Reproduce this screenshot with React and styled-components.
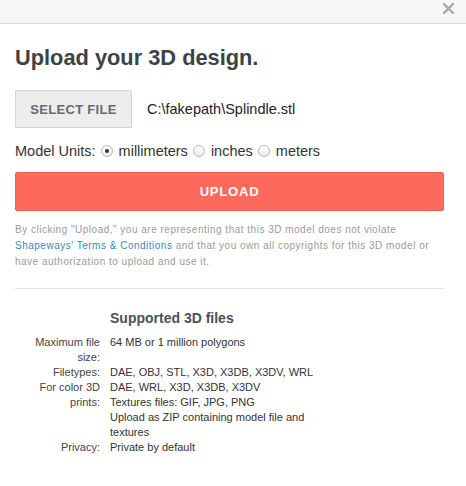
import React from "react";
import styled, { createGlobalStyle } from "styled-components";

const GlobalStyle = createGlobalStyle`
  html, body {
    margin: 0;
    padding: 0;
    background: #fff;
    font-family: "Liberation Sans", Arial, sans-serif;
  }
`;

const Modal = styled.div`
  width: 466px;
  height: 486px;
  background: #fff;
`;

const TopBar = styled.div`
  height: 24px;
  background: #f6f6f6;
  border-bottom: 1px solid #dedede;
  display: flex;
  justify-content: flex-end;
  align-items: flex-start;
  padding: 3px 12px 0 0;
  box-sizing: border-box;
`;

const CloseIcon = () => (
  <svg width="11" height="11" viewBox="0 0 11 11">
    <path d="M1 1L10 10M10 1L1 10" stroke="#a9a9a9" strokeWidth="2.4" strokeLinecap="square" />
  </svg>
);

const Body = styled.div`
  padding: 0 22px 0 15px;
`;

const Title = styled.h1`
  margin: 20px 0 0;
  font-size: 21.8px;
  line-height: 28px;
  font-weight: bold;
  color: #3b4347;
`;

const FileRow = styled.div`
  display: flex;
  align-items: center;
  gap: 15px;
  margin-top: 18px;
`;

const SelectButton = styled.button`
  width: 117px;
  height: 38px;
  background: #ededed;
  border: 1px solid #d3d3d3;
  border-radius: 1px;
  font-family: inherit;
  font-size: 13px;
  font-weight: bold;
  letter-spacing: 0.3px;
  color: #666b6e;
  padding: 0;
`;

const FileName = styled.span`
  font-size: 14.5px;
  color: #222;
`;

const UnitsRow = styled.div`
  display: flex;
  align-items: center;
  margin-top: 11px;
  font-size: 14.5px;
  color: #333;
  height: 24px;
`;

const Radio = styled.span`
  width: 12px;
  height: 12px;
  border-radius: 50%;
  border: 1px solid #b9b9b9;
  background: linear-gradient(#fff, #ececec);
  display: inline-flex;
  align-items: center;
  justify-content: center;
  margin: 0 6px 0 5px;
  box-sizing: border-box;
  &::after {
    content: "";
    width: 4px;
    height: 4px;
    border-radius: 50%;
    background: ${(p) => (p.checked ? "#333" : "transparent")};
  }
`;

const UploadButton = styled.button`
  display: block;
  width: 100%;
  height: 39px;
  margin-top: 9px;
  background: #fd6a5b;
  border: 1px solid #ef5f51;
  border-radius: 2px;
  color: #fff;
  font-family: inherit;
  font-size: 13px;
  font-weight: bold;
  letter-spacing: 0.8px;
`;

const Disclaimer = styled.p`
  margin: 11px 0 0;
  font-size: 10px;
  line-height: 16px;
  color: #9a9a9a;
  letter-spacing: 0.5px;
`;

const TermsLink = styled.a`
  color: #2d8cc4;
  text-decoration: none;
`;

const Divider = styled.hr`
  border: 0;
  border-top: 1px solid #e4e4e4;
  margin: 18px 0 0;
`;

const Supported = styled.div`
  margin-top: 20px;
  display: grid;
  grid-template-columns: 85px 215px;
  column-gap: 10px;
  font-size: 11px;
  line-height: 15px;
  color: #333;
`;

const SupportedTitle = styled.h2`
  grid-column: 2;
  margin: 0 0 8px;
  font-size: 14px;
  line-height: 18px;
  font-weight: bold;
  color: #4a5256;
`;

const Label = styled.div`
  text-align: right;
  color: #444;
`;

const Value = styled.div`
  color: #333;
`;

const specs = [
  ["Maximum file size:", ["64 MB or 1 million polygons"]],
  ["Filetypes:", ["DAE, OBJ, STL, X3D, X3DB, X3DV, WRL"]],
  [
    "For color 3D prints:",
    [
      "DAE, WRL, X3D, X3DB, X3DV",
      "Textures files: GIF, JPG, PNG",
      "Upload as ZIP containing model file and textures",
    ],
  ],
  ["Privacy:", ["Private by default"]],
];

export default function App() {
  return (
    <>
      <GlobalStyle />
      <Modal>
        <TopBar>
          <CloseIcon />
        </TopBar>
        <Body>
          <Title>Upload your 3D design.</Title>
          <FileRow>
            <SelectButton>SELECT FILE</SelectButton>
            <FileName>C:\fakepath\Splindle.stl</FileName>
          </FileRow>
          <UnitsRow>
            Model Units:
            <Radio checked />
            millimeters
            <Radio />
            inches
            <Radio />
            meters
          </UnitsRow>
          <UploadButton>UPLOAD</UploadButton>
          <Disclaimer>
            By clicking "Upload," you are representing that this 3D model does not violate{" "}
            <TermsLink href="#">Shapeways' Terms &amp; Conditions</TermsLink> and that you own all
            copyrights for this 3D model or have authorization to upload and use it.
          </Disclaimer>
          <Divider />
          <Supported>
            <SupportedTitle>Supported 3D files</SupportedTitle>
            {specs.map(([label, values]) => (
              <React.Fragment key={label}>
                <Label>{label}</Label>
                <Value>
                  {values.map((v) => (
                    <div key={v}>{v}</div>
                  ))}
                </Value>
              </React.Fragment>
            ))}
          </Supported>
        </Body>
      </Modal>
    </>
  );
}
